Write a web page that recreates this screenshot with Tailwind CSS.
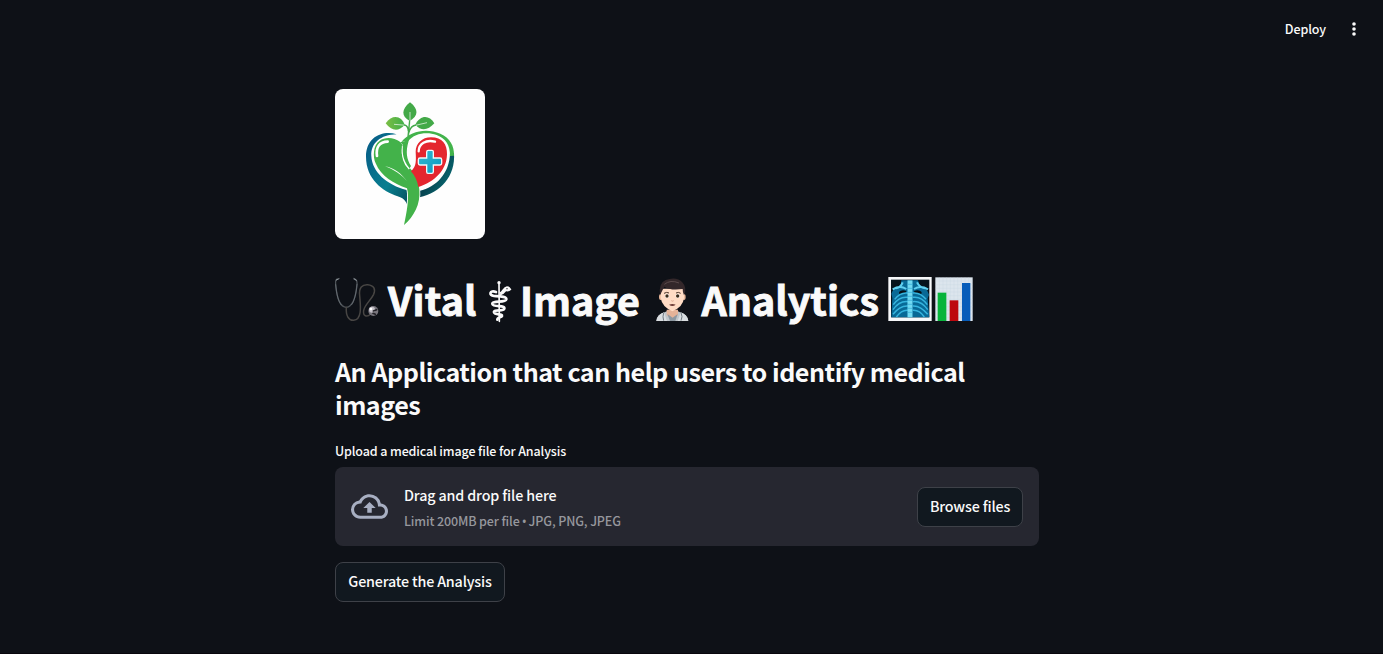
<!DOCTYPE html>
<html lang="en">
<head>
<meta charset="utf-8">
<title>Vital Image Analytics</title>
<script src="https://cdn.jsdelivr.net/npm/@tailwindcss/browser@4"></script>
</head>
<body class="bg-[#0e1117] text-[#fafafa] font-['Noto_Sans_CJK_SC','Noto_Sans',sans-serif] h-[654px] overflow-hidden flex flex-col">
<header class="h-[60px] shrink-0 flex items-center justify-end pr-[19px] gap-[18px]">
  <span class="text-[12.5px] leading-5 font-medium tracking-[-0.1px] pb-[2px]">Deploy</span>
  <svg class="w-5 h-5" viewBox="0 0 20 20" fill="#fafafa"><circle cx="10" cy="4" r="1.8"/><circle cx="10" cy="9" r="1.8"/><circle cx="10" cy="14" r="1.8"/></svg>
</header>
<main class="w-[704px] ml-[335px] pt-[29px] flex flex-col flex-1">
  <svg class="w-[150px] h-[150px] rounded-lg bg-[#fefefe] shrink-0" viewBox="15 15 450 450" fill="none">
    <defs>
      <linearGradient id="teal" x1="110" y1="170" x2="370" y2="310" gradientUnits="userSpaceOnUse"><stop stop-color="#075d87"/><stop offset=".4" stop-color="#087f90"/><stop offset=".75" stop-color="#064451"/><stop offset="1" stop-color="#087078"/></linearGradient>
      <linearGradient id="leaf" x1="170" y1="0" x2="225" y2="0" gradientUnits="userSpaceOnUse"><stop stop-color="#78bd45"/><stop offset="1" stop-color="#3fae49"/></linearGradient>
      <linearGradient id="cross" x1="265" y1="200" x2="335" y2="265" gradientUnits="userSpaceOnUse"><stop stop-color="#35b9d2"/><stop offset="1" stop-color="#0799c0"/></linearGradient>
    </defs>
    <path d="M200 151C160 138 108 157 108 218C108 286 158 321 203 337C225 344 233 356 236 384C249 358 241 332 230 318C171 303 126 264 124 216C122 178 151 152 200 151Z" fill="url(#teal)"/>
    <path d="M372 207C377 278 331 326 269 340L270 320C317 310 359 269 360 207Z" fill="url(#teal)"/>
    <path d="M214 174C243 139 291 132 331 149C360 162 373 185 372 215L360 216C361 184 347 163 320 153C289 142 252 149 235 171Z" fill="#42b34b"/>
    <path d="M211 174C190 158 164 159 149 170C129 183 128 218 137 238C153 277 192 300 231 313C239 340 230 386 222 423C252 398 272 359 268 318C266 285 252 264 231 243C217 226 211 204 218 184Z" fill="#43b24a" stroke="#fefefe" stroke-width="5" paint-order="stroke"/>
    <path d="M243 262C260 245 258 231 257 203C257 179 276 160 303 160C337 160 352 181 351 211C350 260 313 294 265 309C262 291 255 275 243 262Z" fill="#e4262f"/>
    <path d="M218 187C216 215 222 240 238 255" stroke="#fff" stroke-width="5"/>
    <path d="M219 183C216 210 220 230 239 253L243 246C230 226 226 204 236 171L241 112L235 158C231 169 222 176 211 174Z" fill="#43b24a"/>
    <path d="M141 216C137 188 149 174 173 173" stroke="#fff" stroke-width="8" stroke-linecap="round"/>
    <path d="M266 202C266 179 288 166 315 173" stroke="#fff" stroke-width="7" stroke-linecap="round"/>
    <path d="M165 247C193 252 215 269 231 292C215 272 192 257 165 247Z" fill="#fff"/>
    <path d="M240 55C214 76 213 97 239 111C265 96 267 76 240 55Z" fill="#43a948"/>
    <path d="M167 118C187 90 215 95 224 123C204 145 184 140 167 118Z" fill="url(#leaf)"/>
    <path d="M313 118C297 91 270 94 256 122C274 143 294 139 313 118Z" fill="#43a948"/>
    <path d="M240 84V112M192 121L230 124M291 116L248 126" stroke="#fff" stroke-width="2"/>
    <path d="M239 109L234 158M222 123Q234 123 235 142M258 123Q242 125 237 145" stroke="#42a849" stroke-width="4"/>
    <path d="M295 199H306Q310 199 310 203V222H330Q335 222 335 227V238Q335 243 330 243H310V263Q310 268 305 268H294Q290 268 290 263V243H270Q265 243 265 238V227Q265 222 270 222H290V204Q290 199 295 199Z" fill="url(#cross)" stroke="#eefafd" stroke-width="4"/>
  </svg>

  <h1 class="mt-[36px] h-[53px] shrink-0 flex items-center whitespace-nowrap text-[39.4px] leading-[47px] font-bold [-webkit-text-stroke:0.9px_#fafafa]">
    <svg class="w-[53px] h-[53px] shrink-0" viewBox="15 15 159 159" fill="none" stroke-linecap="round">
      <path d="M23 27Q15 27 17 44C20 79 27 111 49 112C70 110 78 74 81 43Q82 27 72 27" stroke="#4e5358" stroke-width="4"/>
      <path d="M17 44C20 74 25 94 33 104M81 43C79 71 73 94 65 104" stroke="#7c858c" stroke-width="1.5"/>
      <path d="M19 30L27 26M72 26L79 31" stroke="#929ba1" stroke-width="3"/>
      <path d="M49 112C47 137 56 152 71 151C98 148 91 103 89 77C86 52 97 43 113 44C133 46 137 58 131 73C122 91 104 105 101 121C98 138 111 143 121 133" stroke="#484644" stroke-width="4.5"/>
      <circle cx="130" cy="123" r="15" fill="#77757c"/><circle cx="126" cy="119" r="9" fill="#c4c0c8"/><path d="M130 123L140 119M129 130L136 133" stroke="#222127" stroke-width="5"/><circle cx="123" cy="117" r="4" fill="#fff"/>
    </svg>
    <span class="w-[98px] h-[53px] tracking-[0.2px]">Vital</span>
    <svg class="w-[34px] h-[53px] shrink-0" viewBox="468 15 102 159" fill="none" stroke="#fafafa" stroke-linecap="round">
      <path d="M507 39L508 154" stroke-width="5"/><circle cx="507" cy="38" r="5" fill="#fafafa" stroke="none"/>
      <path d="M498 66C479 59 475 76 492 78C508 79 531 79 529 88C526 99 485 91 487 102C490 113 527 104 523 116C520 126 490 116 492 127C495 136 518 130 516 138C514 143 502 141 502 149" stroke-width="8"/>
      <path d="M512 68C519 65 521 52 531 51Q537 51 541 58Q534 64 527 61C523 65 521 73 512 73" stroke-width="5" fill="#fafafa"/><circle cx="531" cy="56" r="2" fill="#0e1117" stroke="none"/>
    </svg>
    <span class="w-[134.5px] h-[53px]">Image</span>
    <svg class="w-[47px] h-[53px] shrink-0" viewBox="433 15 141 159">
      <path d="M437 153Q438 133 462 127L474 121H496L508 127Q531 133 533 153Z" fill="#bfc5ca"/>
      <path d="M468 119H502V136Q486 153 468 136Z" fill="#e5b398"/>
      <path d="M470 132L486 143L501 132L494 153H478Z" fill="#8d98a1"/>
      <path d="M460 127L469 153H437Q440 134 460 127M510 127L501 153H533Q530 134 510 127Z" fill="#d9dde0"/>
      <ellipse cx="450" cy="81" rx="5" ry="9" fill="#e9b89b"/><ellipse cx="520" cy="81" rx="5" ry="9" fill="#e9b89b"/>
      <path d="M450 56H520V84Q517 111 485 124Q454 110 450 84Z" fill="#ffdcc5"/>
      <path d="M448 76Q443 39 465 30Q498 18 516 38Q530 53 520 76Q516 68 516 57Q478 62 461 50Q453 64 448 76Z" fill="#33272a"/>
      <path d="M461 43Q479 28 505 39" fill="none" stroke="#5b4b4c" stroke-width="3"/>
      <path d="M460 70Q468 65 475 69M496 69Q504 65 510 70" fill="none" stroke="#4a3529" stroke-width="3"/>
      <ellipse cx="469" cy="78" rx="6" ry="6.5" fill="#fff"/><ellipse cx="501" cy="78" rx="6" ry="6.5" fill="#fff"/>
      <circle cx="469" cy="78" r="5" fill="#3b2b19"/><circle cx="501" cy="78" r="5" fill="#3b2b19"/>
      <path d="M482 92Q485 95 489 92" stroke="#cc9379" stroke-width="2" fill="none"/><path d="M475 104Q485 100 495 104Q485 112 475 104Z" fill="#6d3c37"/>
      <path d="M459 128Q455 141 459 152M511 128Q517 140 511 152" stroke="#707a82" stroke-width="3" fill="none"/>
    </svg>
    <span class="w-[186.5px] h-[53px]">Analytics</span>
    <svg class="w-[90px] h-[53px] shrink-0" viewBox="594 15 270 159" fill="none">
      <rect x="595" y="21" width="130" height="132" fill="#f7f8fa"/><rect x="603" y="29" width="115" height="113" fill="#05131c"/>
      <path d="M634 31H684L690 48Q712 53 717 74L713 85L718 142H604L607 84L604 71Q610 52 632 47Z" fill="#086996"/>
      <path d="M608 58Q630 45 649 57M714 58Q692 45 672 57M638 37Q633 52 618 55M681 37Q688 52 705 55" stroke="#5fd0f0" stroke-width="6"/>
      <path d="M627 66Q635 58 649 63L646 72Q637 68 628 73ZM695 66Q687 58 672 63L675 72Q685 68 694 73Z" fill="#061017"/>
      <path d="M654 69Q630 66 614 88M654 82Q628 78 610 104M654 95Q628 92 609 119M654 108Q630 106 609 133M654 121Q635 119 619 141M668 69Q691 66 708 88M668 82Q694 78 712 104M668 95Q694 92 713 119M668 108Q691 106 713 133M668 121Q688 119 703 141" stroke="#36b5df" stroke-width="4.5"/>
      <path d="M660 31V142" stroke="#71d9f2" stroke-width="15"/><path d="M651 43H669M651 55H669M651 67H669M651 79H669M651 91H669M651 103H669M651 115H669M651 127H669" stroke="#31a8d4" stroke-width="2"/>
      <rect x="736" y="22" width="112" height="131" fill="#dce5ed"/>
      <path d="M737 33H847M737 44H847M737 55H847M737 66H847M737 77H847M737 88H847M737 99H847M737 110H847M737 121H847M737 132H847M737 143H847M748 22V153M759 22V153M770 22V153M781 22V153M792 22V153M803 22V153M814 22V153M825 22V153M836 22V153" stroke="#c8d5e0"/>
      <rect x="743" y="68" width="26" height="85" fill="#08b43b"/><rect x="779" y="91" width="26" height="62" fill="#bd080e"/><rect x="816" y="39" width="25" height="114" fill="#075cb9"/>
    </svg>
  </h1>

  <h2 class="mt-[27px] shrink-0 text-[25.1px] leading-[33px] font-bold tracking-[-0.48px] whitespace-nowrap">An Application that can help users to identify medical<br>images</h2>

  <div class="mt-[20px] shrink-0 text-[12.5px] leading-5 font-medium tracking-[-0.13px]">Upload a medical image file for Analysis</div>
  <section class="mt-[6px] h-[79px] shrink-0 rounded-lg bg-[#262730] flex items-center px-4">
    <svg class="w-[37px] h-[37px] mr-4" viewBox="0 0 24 24" fill="#a8afc2"><path d="M19.35 10.04A7.49 7.49 0 0 0 12 4C9.11 4 6.6 5.64 5.35 8.04A5.994 5.994 0 0 0 0 14c0 3.31 2.69 6 6 6h13c2.76 0 5-2.24 5-5 0-2.64-2.05-4.78-4.65-4.96zM19 18H6c-2.21 0-4-1.79-4-4s1.79-4 4-4h.71C7.37 7.69 9.48 6 12 6c3.04 0 5.5 2.46 5.5 5.5v.5H19c1.66 0 3 1.34 3 3s-1.34 3-3 3zM8 13h2.55v3h2.9v-3H16l-4-4z"/></svg>
    <div class="flex flex-col gap-[4px] flex-1">
      <span class="text-[14.3px] leading-6 font-medium tracking-[-0.14px]">Drag and drop file here</span>
      <span class="text-[12.5px] leading-5 font-medium tracking-[-0.13px] text-[#96979d]">Limit 200MB per file <span class="font-['Noto_Sans'] text-[12px] leading-none -mx-[0.4px]">•</span> JPG, PNG, JPEG</span>
    </div>
    <button class="w-[106px] h-10 rounded-lg border border-[#3e4148] bg-[#11181f] text-[14.3px] leading-6 font-medium tracking-[-0.17px] pb-[2px] whitespace-nowrap">Browse files</button>
  </section>
  <button class="mt-4 w-[170px] h-10 shrink-0 rounded-lg border border-[#3e4148] bg-[#11181f] text-[14.3px] leading-6 font-medium tracking-[-0.18px] pb-[2px] whitespace-nowrap">Generate the Analysis</button>
</main>
<footer class="h-px shrink-0 bg-[#08060c]"></footer>
</body>
</html>
